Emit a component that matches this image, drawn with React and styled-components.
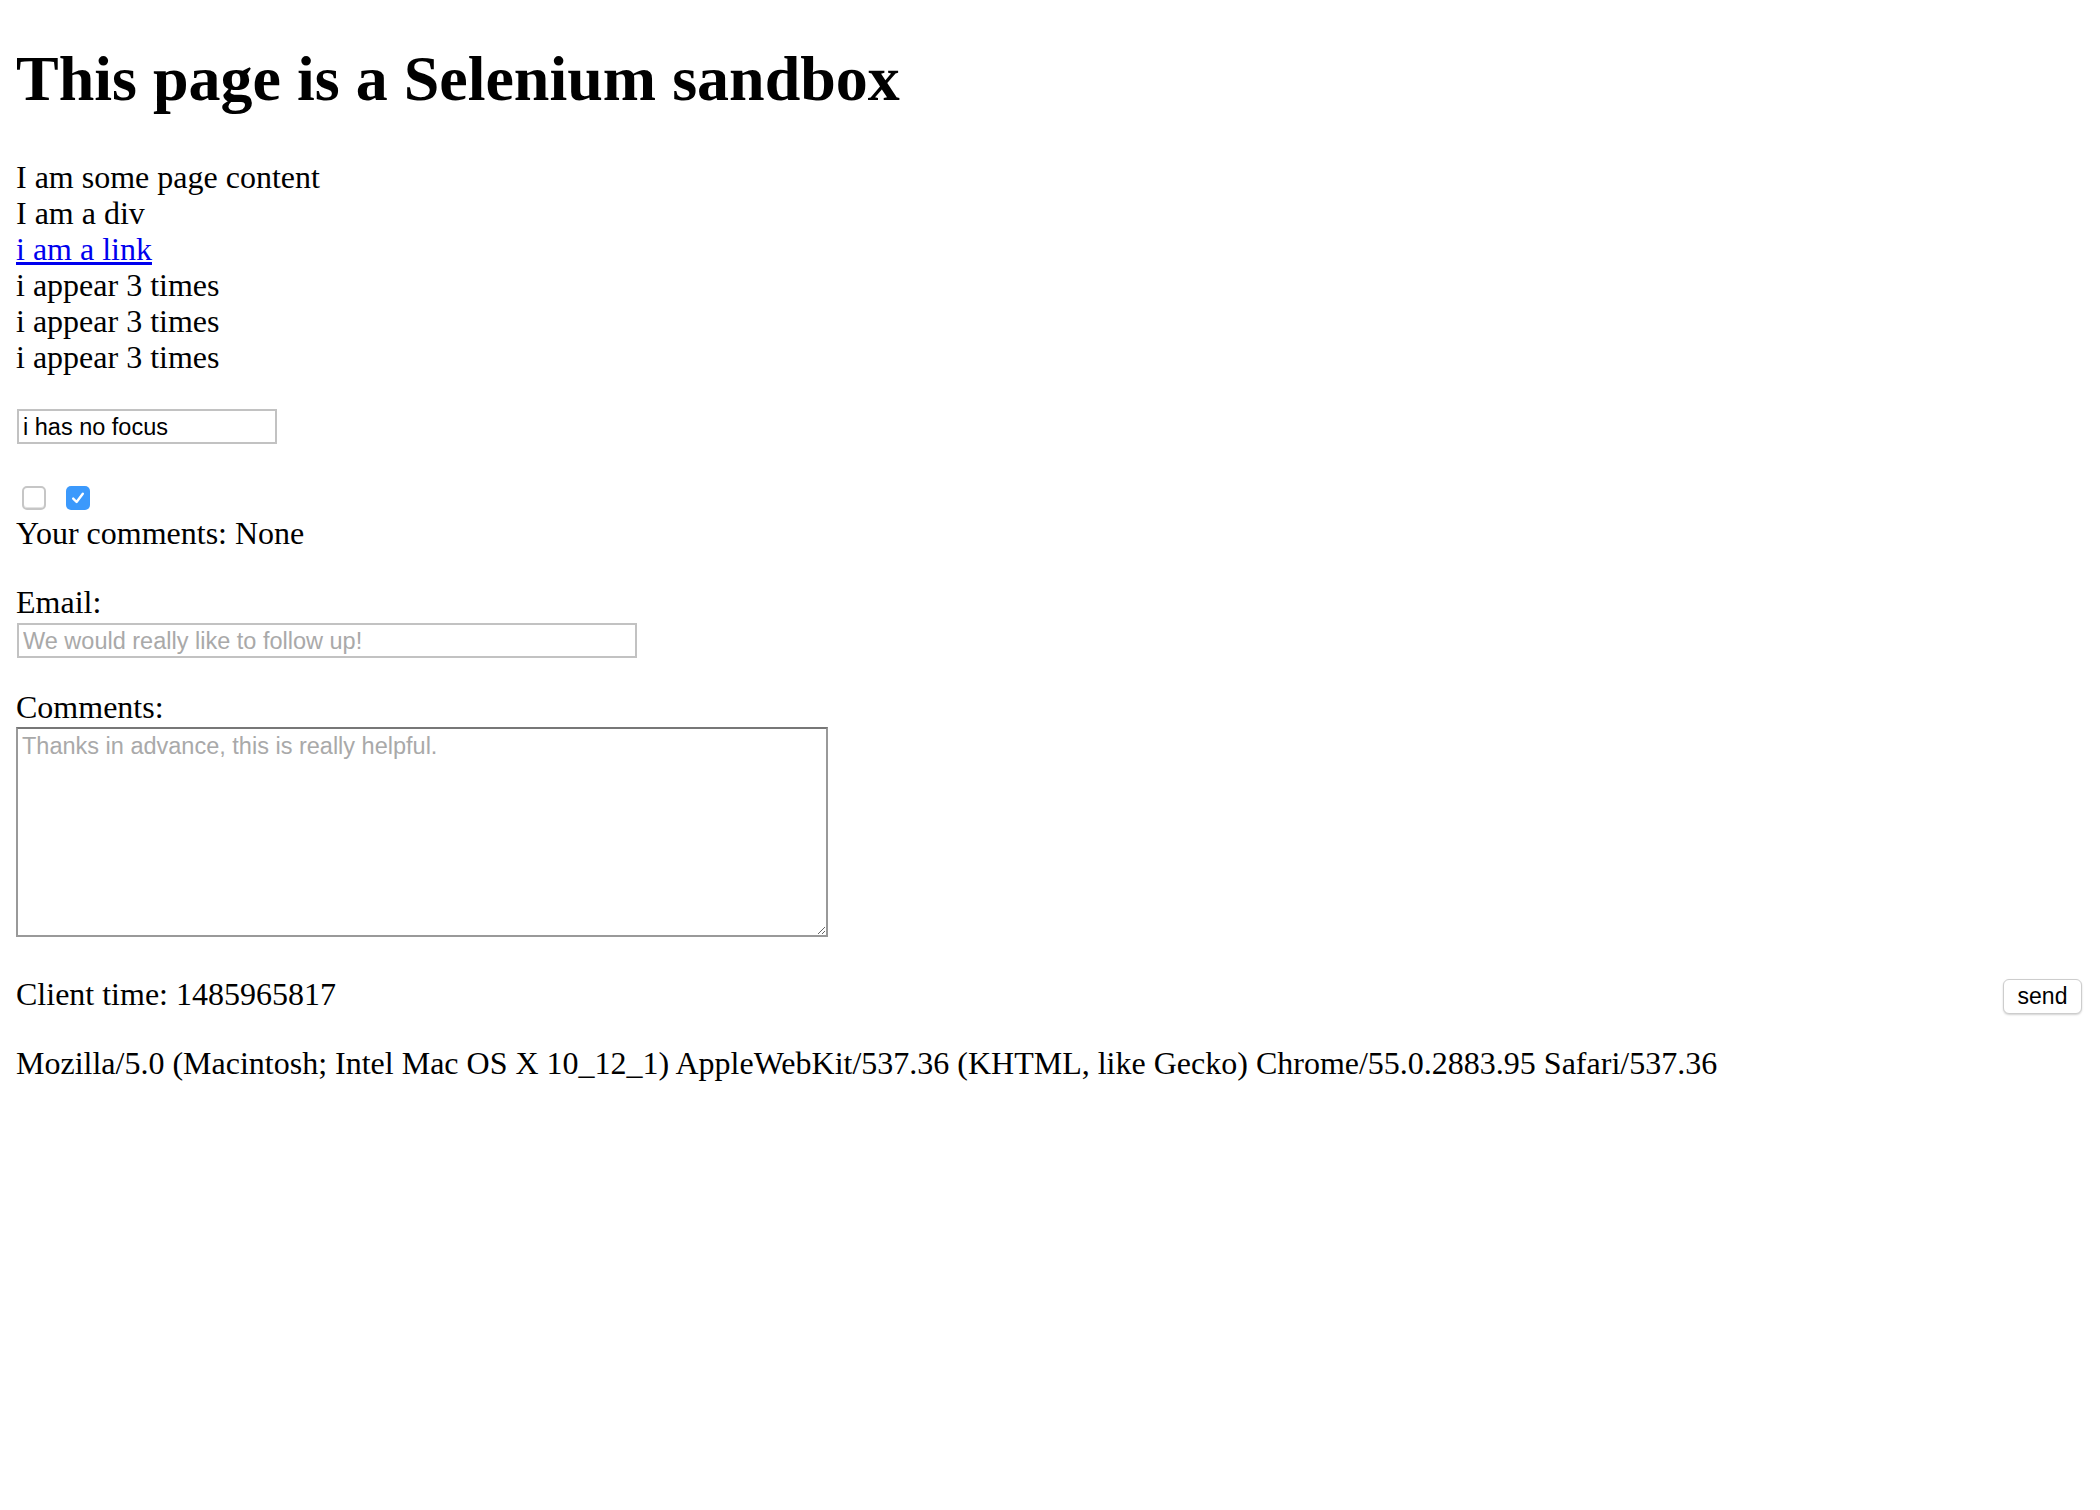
import styled, { createGlobalStyle } from "styled-components";

const GlobalStyle = createGlobalStyle`
  html, body {
    margin: 0;
    padding: 0;
    background: #fff;
  }
  body {
    font-family: "Liberation Serif", "Times New Roman", serif;
    font-size: 32px;
    line-height: 36px;
    color: #000;
  }
`;

const Page = styled.div`
  padding: 43px 18px 0 16px;
`;

const Title = styled.h1`
  margin: 0 0 44px;
  font-size: 64px;
  line-height: 72px;
  font-weight: 700;
`;

const Line = styled.div`
  height: 36px;
`;

const Link = styled.a`
  color: #0000ee;
  text-decoration: underline;
`;

const TextInput = styled.input`
  display: block;
  box-sizing: border-box;
  width: ${(p) => p.$width}px;
  height: 35px;
  margin: ${(p) => p.$top}px 0 0 1px;
  padding: 1px 4px 0;
  border: 2px solid #c2c2c2;
  border-radius: 0;
  font-family: "Liberation Sans", Arial, sans-serif;
  font-size: 23.5px;
  color: #000;
  outline: none;
  &::placeholder {
    color: #a9a9a9;
  }
`;

const CheckRow = styled.div`
  display: flex;
  gap: 20px;
  height: 29px;
  margin-top: 42px;
  padding-left: 6px;
`;

const Box = styled.span`
  display: flex;
  align-items: center;
  justify-content: center;
  box-sizing: border-box;
  width: 24px;
  height: 24px;
  border-radius: 5px;
  border: ${(p) => (p.$checked ? "none" : "2px solid #c6c6c6")};
  background: ${(p) => (p.$checked ? "#3b99fc" : "#fff")};
  box-shadow: ${(p) => (p.$checked ? "none" : "inset 0 -1px 0 #e2e2e2")};
`;

const Label = styled.div`
  height: 36px;
  margin-top: ${(p) => p.$top}px;
`;

const Comments = styled.textarea`
  display: block;
  box-sizing: border-box;
  width: 812px;
  height: 210px;
  margin: 2px 0 0;
  padding: 4px 4px;
  border: 2px solid #999;
  border-top-color: #777;
  border-radius: 0;
  font-family: "Liberation Sans", Arial, sans-serif;
  font-size: 23.5px;
  line-height: 27px;
  outline: none;
  resize: both;
  &::placeholder {
    color: #a9a9a9;
  }
`;

const ClientRow = styled.div`
  display: flex;
  justify-content: space-between;
  align-items: flex-start;
  margin-top: 39px;
  height: 36px;
`;

const SendButton = styled.button`
  box-sizing: border-box;
  width: 79px;
  height: 35px;
  margin-top: 3px;
  padding: 0;
  background: #fff;
  border: 1px solid #cdcdcd;
  border-radius: 6px;
  box-shadow: 0 1px 2px rgba(0, 0, 0, 0.18);
  font-family: "Liberation Sans", Arial, sans-serif;
  font-size: 23px;
  color: #000;
`;

const Agent = styled.div`
  margin-top: 33px;
  white-space: nowrap;
`;

const Check = () => (
  <svg width="16" height="16" viewBox="0 0 16 16">
    <path
      d="M3.2 8.6 L6.6 12 L12.8 3.8"
      fill="none"
      stroke="#fff"
      strokeWidth="2.4"
      strokeLinecap="round"
      strokeLinejoin="round"
    />
  </svg>
);

const App = () => {
  return (
    <Page>
      <GlobalStyle />
      <Title>This page is a Selenium sandbox</Title>
      <Line>I am some page content</Line>
      <Line>I am a div</Line>
      <Line>
        <Link href="#">i am a link</Link>
      </Line>
      <Line>i appear 3 times</Line>
      <Line>i appear 3 times</Line>
      <Line>i appear 3 times</Line>
      <TextInput $width={260} $top={34} defaultValue="i has no focus" />
      <CheckRow>
        <Box role="checkbox" aria-checked="false" />
        <Box role="checkbox" aria-checked="true" $checked>
          <Check />
        </Box>
      </CheckRow>
      <Line>Your comments: None</Line>
      <Label $top={33}>Email:</Label>
      <TextInput $width={620} $top={3} placeholder="We would really like to follow up!" />
      <Label $top={31}>Comments:</Label>
      <Comments placeholder="Thanks in advance, this is really helpful." />
      <ClientRow>
        <span>Client time: 1485965817</span>
        <SendButton>send</SendButton>
      </ClientRow>
      <Agent>
        Mozilla/5.0 (Macintosh; Intel Mac OS X 10_12_1) AppleWebKit/537.36 (KHTML, like Gecko)
        Chrome/55.0.2883.95 Safari/537.36
      </Agent>
    </Page>
  );
};

export default App;
